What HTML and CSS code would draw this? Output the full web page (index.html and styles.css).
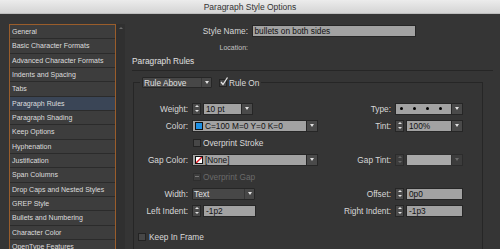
FILE: index.html
```html
<!DOCTYPE html>
<html>
<head>
<meta charset="utf-8">
<link rel="stylesheet" href="styles.css">
</head>
<body>
<div class="titlebar">Paragraph Style Options</div>
<div class="main">
  <div class="side">
    <ul class="list">
      <li>General</li>
      <li>Basic Character Formats</li>
      <li>Advanced Character Formats</li>
      <li>Indents and Spacing</li>
      <li>Tabs</li>
      <li class="sel">Paragraph Rules</li>
      <li>Paragraph Shading</li>
      <li>Keep Options</li>
      <li>Hyphenation</li>
      <li>Justification</li>
      <li>Span Columns</li>
      <li>Drop Caps and Nested Styles</li>
      <li>GREP Style</li>
      <li>Bullets and Numbering</li>
      <li>Character Color</li>
      <li>OpenType Features</li>
    </ul>
    <div class="scroll"><span class="tri-up dim"></span></div>
  </div>
  <div class="content">
    <div class="row-name">
      <span class="lbl-top">Style Name:</span>
      <div class="fld name">bullets on both sides</div>
    </div>
    <div class="row-loc"><span class="lbl-top small">Location:</span></div>
    <div class="heading">Paragraph Rules</div>
    <div class="hr"></div>
    <fieldset class="group">
      <legend class="legend">
        <div class="legend-row">
          <div class="popup rule"><span class="pop-text">Rule Above</span><span class="pop-arr"><span class="tri-down"></span></span></div>
          <span class="cb checked"><svg width="10" height="10" viewBox="0 0 10 10"><path d="M2 5 L4 7.5 L8.5 0.5" fill="none" stroke="#e6e6e6" stroke-width="1.3"/></svg></span>
          <span class="cb-label">Rule On</span>
        </div>
      </legend>
      <div class="grid">
        <span class="lab">Weight:</span>
        <div class="combo">
          <span class="spin"><span class="tri-up"></span><span class="tri-down"></span></span>
          <div class="fld w39">10 pt</div>
          <span class="arr"><span class="tri-down"></span></span>
        </div>
        <span class="lab">Type:</span>
        <div class="combo">
          <div class="fld w57 dots"><span class="dot"></span><span class="dot"></span><span class="dot"></span><span class="dot"></span></div>
          <span class="arr"><span class="tri-down"></span></span>
        </div>

        <span class="lab">Color:</span>
        <div class="combo">
          <div class="fld w115 swrow"><span class="swatch blue"></span>C=100 M=0 Y=0 K=0</div>
          <span class="arr"><span class="tri-down"></span></span>
        </div>
        <span class="lab">Tint:</span>
        <div class="combo">
          <span class="spin"><span class="tri-up"></span><span class="tri-down"></span></span>
          <div class="fld w46">100%</div>
          <span class="arr"><span class="tri-down"></span></span>
        </div>

        <div class="cbrow">
          <span class="cb"></span><span class="cb-label">Overprint Stroke</span>
        </div>

        <span class="lab">Gap Color:</span>
        <div class="combo">
          <div class="fld w115 swrow"><span class="swatch none"><svg width="8" height="8" viewBox="0 0 8 8"><rect x="0" y="0" width="8" height="8" fill="#fff"/><path d="M0 8 L8 0" stroke="#e0141e" stroke-width="1.4"/></svg></span>[None]</div>
          <span class="arr"><span class="tri-down"></span></span>
        </div>
        <span class="lab">Gap Tint:</span>
        <div class="combo">
          <span class="spin disabled"><span class="tri-up dim"></span><span class="tri-down dim"></span></span>
          <div class="fld w46 off"></div>
          <span class="arr disabled"><span class="tri-down dim"></span></span>
        </div>

        <div class="cbrow">
          <span class="cb mixed"><span class="dash"></span></span><span class="cb-label off">Overprint Gap</span>
        </div>

        <span class="lab">Width:</span>
        <div class="combo">
          <div class="popup wtext"><span class="pop-text">Text</span><span class="pop-arr"><span class="tri-down"></span></span></div>
        </div>
        <span class="lab">Offset:</span>
        <div class="combo">
          <span class="spin"><span class="tri-up"></span><span class="tri-down"></span></span>
          <div class="fld w57">0p0</div>
        </div>

        <span class="lab">Left Indent:</span>
        <div class="combo">
          <span class="spin"><span class="tri-up"></span><span class="tri-down"></span></span>
          <div class="fld w53">-1p2</div>
        </div>
        <span class="lab">Right Indent:</span>
        <div class="combo">
          <span class="spin"><span class="tri-up"></span><span class="tri-down"></span></span>
          <div class="fld w57">-1p3</div>
        </div>
      </div>
      <div class="keep">
        <span class="cb"></span><span class="cb-label">Keep In Frame</span>
      </div>
    </fieldset>
  </div>
</div>
</body>
</html>
```
FILE: styles.css
```css
html, body {
  margin: 0;
  padding: 0;
}
body {
  width: 500px;
  height: 249px;
  overflow: hidden;
  background: #353535;
  font-family: "Liberation Sans", Arial, sans-serif;
  color: #d2d2d2;
}
.titlebar {
  height: 14px;
  line-height: 14px;
  text-align: center;
  font-size: 8.5px;
  color: #333;
  background: linear-gradient(#ececec, #d4d4d4);
  box-sizing: border-box;
  border-bottom: 1px solid #bdbdbd;
}
.main {
  display: flex;
  height: 235px;
  overflow: hidden;
}
.side {
  display: flex;
  padding: 10px 0 0 9px;
}
.list {
  margin: 0;
  padding: 0;
  list-style: none;
  width: 107px;
  height: 225px;
  box-sizing: border-box;
  border: 1px solid #9a5d2b;
  border-bottom: 0;
  overflow: hidden;
  background: #3c3c3c;
}
.list li {
  height: 14.33px;
  box-sizing: border-box;
  border-bottom: 1px solid #2b2b2b;
  background: #3d3d3d;
  padding-left: 2px;
  font-size: 7px;
  line-height: 13.33px;
  color: #dedede;
  white-space: nowrap;
}
.list li.sel {
  background: #3a4556;
}
.scroll {
  width: 9px;
  height: 225px;
  background: #303030;
  display: flex;
  justify-content: center;
  align-items: flex-start;
  padding-top: 3px;
  box-sizing: border-box;
}
.content {
  flex: 1;
  padding-left: 7px;
  height: 235px;
  overflow: hidden;
}
.row-name {
  display: flex;
  align-items: center;
  margin-top: 11px;
  height: 12px;
}
.lbl-top {
  display: block;
  width: 116px;
  text-align: right;
  font-size: 8.3px;
  color: #d8d8d8;
}
.lbl-top.small {
  font-size: 7px;
  color: #c4c4c4;
}
.row-loc {
  margin-top: 5px;
  height: 10px;
  display: flex;
  align-items: center;
}
.heading {
  margin-top: 4px;
  height: 10px;
  line-height: 10px;
  font-size: 8.3px;
  color: #e0e0e0;
}
.hr {
  margin-top: 4px;
  width: 361px;
  height: 1px;
  background: #262626;
}
.group {
  margin: 6px 0 0 1px;
  padding: 0;
  width: 350px;
  height: 172px;
  box-sizing: border-box;
  border: 1px solid #262626;
  border-bottom: 0;
  min-width: 0;
}
.legend {
  margin-left: 6px;
  padding: 0 2px;
  height: 11px;
}
.legend-row {
  display: flex;
  align-items: center;
  height: 11px;
}
.popup {
  display: flex;
  align-items: center;
  height: 11px;
  box-sizing: border-box;
  background: #474747;
  border: 1px solid #262626;
  border-radius: 1px;
  font-size: 8.3px;
  color: #e0e0e0;
}
.popup.rule {
  width: 70px;
}
.popup.wtext {
  width: 63px;
  height: 12px;
}
.pop-text {
  flex: 1;
  padding-left: 1px;
  white-space: nowrap;
}
.pop-arr {
  width: 9px;
  height: 100%;
  border-left: 1px solid #363636;
  display: flex;
  align-items: center;
  justify-content: center;
}
.cb {
  display: inline-flex;
  align-items: center;
  justify-content: center;
  width: 8px;
  height: 8px;
  box-sizing: border-box;
  border: 1px solid #232323;
  background: #474747;
  overflow: visible;
  position: relative;
}
.cb.checked {
  margin-left: 7px;
}
.cb.checked svg {
  position: absolute;
  left: -1px;
  top: -3px;
}
.cb.mixed {
  border-color: #2e2e2e;
  background: #3d3d3d;
}
.dash {
  width: 4px;
  height: 1px;
  background: #777;
}
.cb-label {
  margin-left: 2px;
  font-size: 8.3px;
  color: #dadada;
  white-space: nowrap;
}
.cb-label.off {
  color: #6a6a6a;
}
.grid {
  margin-top: 12px;
  display: grid;
  grid-template-columns: 54px 126px 69px 68px;
  column-gap: 4px;
  grid-auto-rows: 17px;
  align-items: center;
}
.lab {
  text-align: right;
  font-size: 8.3px;
  color: #d8d8d8;
  white-space: nowrap;
}
.combo {
  display: flex;
  height: 12px;
}
.cbrow {
  grid-column: 2 / span 3;
  display: flex;
  align-items: center;
  padding-left: 1px;
}
.cbrow .cb-label {
  margin-left: 2px;
}
.spin {
  width: 9px;
  height: 12px;
  box-sizing: border-box;
  border: 1px solid #262626;
  background: #4a4a4a;
  margin-right: 2px;
  display: flex;
  flex-direction: column;
  align-items: center;
  justify-content: space-around;
}
.spin.disabled {
  background: #3c3c3c;
  border-color: #2c2c2c;
}
.fld {
  height: 12px;
  box-sizing: border-box;
  background: #a2a2a2;
  border: 1px solid #262626;
  font-size: 8.3px;
  line-height: 10px;
  padding-left: 2px;
  color: #111;
  white-space: nowrap;
  overflow: hidden;
}
.fld.name {
  margin-left: 4px;
  width: 164px;
  padding-left: 1.5px;
}
.fld.off {
  background: #a9a9a9;
  border-color: #303030;
}
.w39 { width: 39px; }
.w46 { width: 46px; }
.w53 { width: 53px; }
.w57 { width: 57px; }
.w115 { width: 115px; }
.swrow {
  display: flex;
  align-items: center;
  padding-left: 2px;
}
.swatch {
  width: 8px;
  height: 8px;
  box-sizing: border-box;
  border: 1px solid #111;
  margin-right: 2px;
  display: inline-block;
  flex: none;
  overflow: hidden;
}
.swatch.blue {
  background: #1c8fe3;
}
.swatch.none svg {
  display: block;
  margin: -1px 0 0 -1px;
}
.dots {
  display: flex;
  align-items: center;
  padding-left: 4px;
  gap: 10px;
}
.dot {
  width: 3px;
  height: 3px;
  border-radius: 50%;
  background: #000;
  flex: none;
}
.arr {
  width: 11px;
  height: 12px;
  box-sizing: border-box;
  border: 1px solid #262626;
  border-left: 0;
  background: #4a4a4a;
  display: flex;
  align-items: center;
  justify-content: center;
}
.arr.disabled {
  background: #3c3c3c;
  border-color: #2c2c2c;
}
.tri-down {
  width: 0;
  height: 0;
  border-left: 2.5px solid transparent;
  border-right: 2.5px solid transparent;
  border-top: 3px solid #e0e0e0;
}
.tri-up {
  width: 0;
  height: 0;
  border-left: 2px solid transparent;
  border-right: 2px solid transparent;
  border-bottom: 2px solid #e0e0e0;
}
.spin .tri-down {
  border-left-width: 2px;
  border-right-width: 2px;
  border-top-width: 2px;
}
.tri-up.dim { border-bottom-color: #6a6a6a; }
.tri-down.dim { border-top-color: #6a6a6a; }
.keep {
  margin-top: 12px;
  margin-left: 4px;
  display: flex;
  align-items: center;
  height: 12px;
}
.keep .cb-label {
  margin-left: 3px;
}
```
